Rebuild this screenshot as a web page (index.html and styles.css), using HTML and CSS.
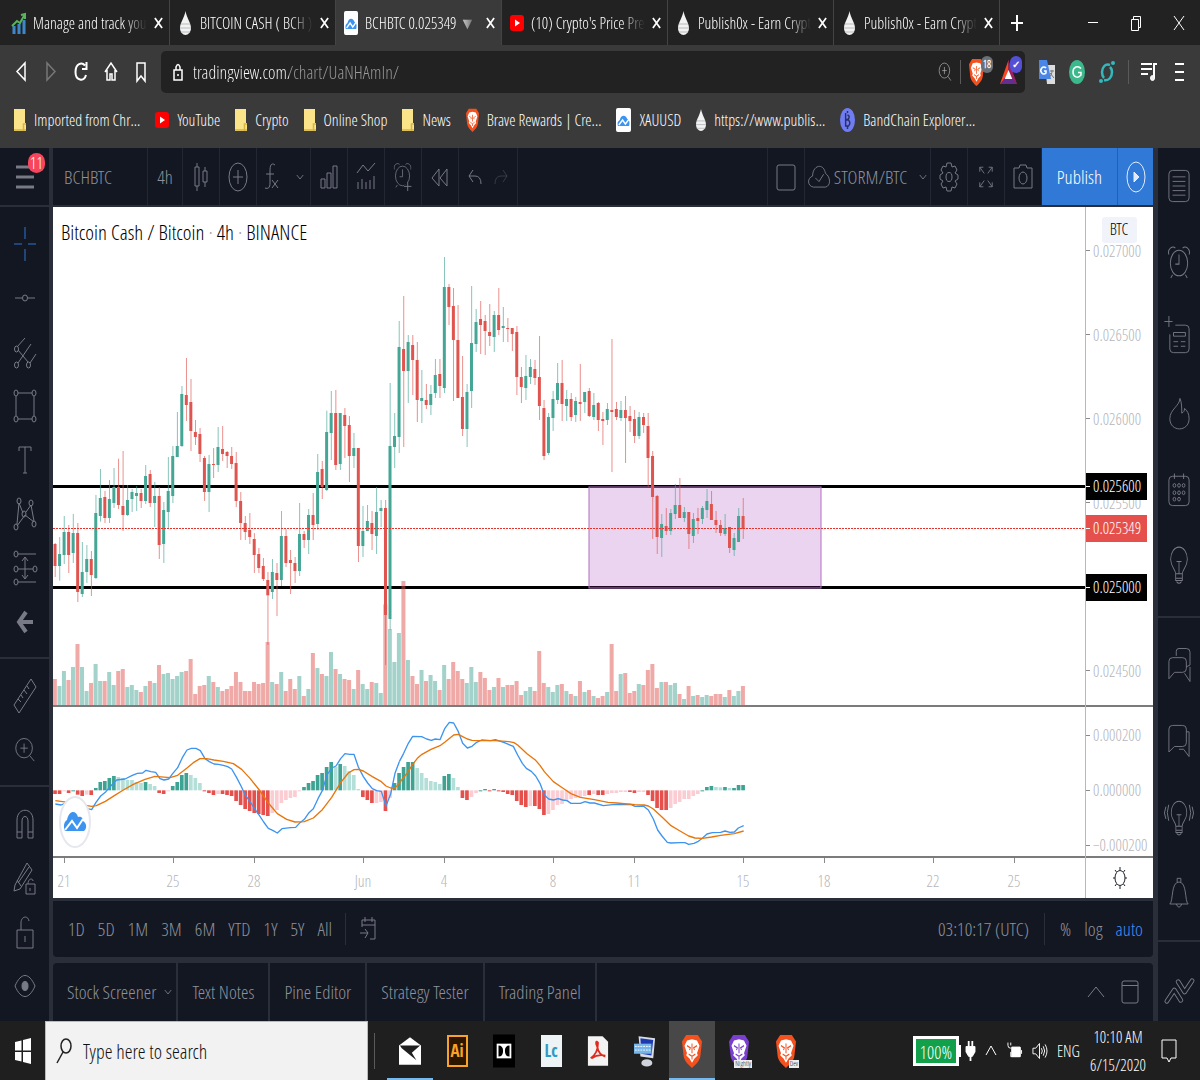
FILE: index.html
```html
<!DOCTYPE html>
<html lang="en">
<head>
    <meta charset="UTF-8">
    <meta name="viewport" content="width=device-width, initial-scale=1.0">
    <title>BCHBTC 0.025349</title>
    <link rel="stylesheet" href="styles.css">
</head>
<body>
    <!-- Icon sprite -->
    <svg class="sprite" aria-hidden="true">
        <symbol id="drop" viewBox="0 0 12 24" preserveAspectRatio="none"><path d="M6 0C7 6 12 12 12 17c0 4-3 7-6 7s-6-3-6-7C0 12 5 6 6 0z" fill="#f2f2f2"/><path d="M1 13h10M0 17h12M1 21h10" stroke="#b4b8bc" stroke-width="1"/></symbol>
        <symbol id="yt" viewBox="0 0 14 16" preserveAspectRatio="none"><rect width="14" height="16" rx="3" fill="#f00"/><path d="M5 4.500l5 3.500-5 3.500z" fill="#fff"/></symbol>
        <symbol id="tv" viewBox="0 0 16 24" preserveAspectRatio="none"><rect width="16" height="24" rx="2" fill="#fff"/><path d="M2 18c-1-3 0-5 2-6 1-5 6-6 8-1 2 0 3 3 2 7z" fill="#3d94f0"/><path d="M3 17l4-5 3 4 4-5" fill="none" stroke="#fff" stroke-width="1.500"/></symbol>
        <symbol id="folder" viewBox="0 0 12 22" preserveAspectRatio="none"><path d="M0 0h11v14h1v8H0z" fill="#fbe389"/><path d="M0 21h12M9.500 22v-7H12" fill="none" stroke="#d9b53f" stroke-width="1.500"/></symbol>
        <symbol id="lion" viewBox="0 0 24 32" preserveAspectRatio="none"><path d="M5 1h14l5 6-2 14c-1 5-6 8-10 11-4-3-9-6-10-11L0 7z" fill="currentColor"/><path d="M6 6l6-1 6 1 3 5-3 7 1 2-4 3-3 4-3-4-4-3 1-2-3-7z" fill="#fff"/><path d="M6 11l4 2-1 2M18 11l-4 2 1 2M12 9v9M8 19l4 2 4-2M12 21v3" fill="none" stroke="currentColor" stroke-width="1.200"/></symbol>
        <symbol id="x" viewBox="0 0 10 12" preserveAspectRatio="none"><path d="M1 1l8 10M9 1L1 11"/></symbol>
        <symbol id="chev" viewBox="0 0 10 6" preserveAspectRatio="none"><path d="M1 1l4 4 4-4"/></symbol>
        <symbol id="bulb" viewBox="0 0 24 36" preserveAspectRatio="none"><path d="M8 25c0-4-6-6-6-13a10 11 0 0 1 20 0c0 7-6 9-6 13zM8 29h8M9 32q3 3 6 0M8 25v6h8v-6M9 14h6M12 14v11"/></symbol>
        <symbol id="alarm" viewBox="0 0 24 32" preserveAspectRatio="none"><ellipse cx="12" cy="17" rx="9.500" ry="12"/><path d="M12 9v9H8M1 9c-2-5 4-9 7-6M23 9c2-5-4-9-7-6M5 28l-2 3M19 28l2 3"/></symbol>
        <symbol id="mag" viewBox="0 0 24 28" preserveAspectRatio="none"><ellipse cx="11" cy="12" rx="9" ry="10.500"/><path d="M7 12h8M11 7v10M17 20l5 6"/></symbol>
    </svg>

    <!-- Browser -->
    <header class="browser">
        <div class="tabs">
            <div class="tab">
                <svg class="fav" viewBox="0 0 14 24" preserveAspectRatio="none"><path d="M2 23v-8M7 23V13M12 23V9" stroke="#3f87c8" stroke-width="3"/><path d="M0 15l5-5 3 2 5-9M9 4l4-1v5" fill="none" stroke="#59b35e" stroke-width="2"/></svg>
                <span class="tab-title">Manage and track you</span>
                <button class="close" aria-label="Close"><svg><use href="#x"/></svg></button>
            </div>
            <div class="tab">
                <svg class="fav drop"><use href="#drop"/></svg>
                <span class="tab-title">BITCOIN CASH ( BCH )</span>
                <button class="close" aria-label="Close"><svg><use href="#x"/></svg></button>
            </div>
            <div class="tab active">
                <svg class="fav"><use href="#tv"/></svg>
                <span class="tab-title">BCHBTC 0.025349 ▼ −</span>
                <button class="close" aria-label="Close"><svg><use href="#x"/></svg></button>
            </div>
            <div class="tab">
                <svg class="fav yt"><use href="#yt"/></svg>
                <span class="tab-title">(10) Crypto's Price Pre</span>
                <button class="close" aria-label="Close"><svg><use href="#x"/></svg></button>
            </div>
            <div class="tab">
                <svg class="fav drop"><use href="#drop"/></svg>
                <span class="tab-title">Publish0x - Earn Crypt</span>
                <button class="close" aria-label="Close"><svg><use href="#x"/></svg></button>
            </div>
            <div class="tab">
                <svg class="fav drop"><use href="#drop"/></svg>
                <span class="tab-title">Publish0x - Earn Crypt</span>
                <button class="close" aria-label="Close"><svg><use href="#x"/></svg></button>
            </div>
            <button class="new-tab" aria-label="New tab"><svg viewBox="0 0 12 18"><path d="M6 1v16M0 9h12" stroke-width="2"/></svg></button>
            <div class="win-buttons">
                <button aria-label="Minimize"><svg viewBox="0 0 12 16"><path d="M1 7.500h10"/></svg></button>
                <button aria-label="Restore"><svg viewBox="0 0 12 16"><path d="M1.500 4.500h7v11h-7zM3.500 4V1.500h7v11H9"/></svg></button>
                <button aria-label="Close window"><svg viewBox="0 0 12 16"><path d="M1 1l10 14M11 1L1 15"/></svg></button>
            </div>
        </div>

        <div class="nav">
            <div class="nav-buttons">
                <button aria-label="Back"><svg viewBox="0 0 14 22"><path d="M11 2v17L3 10.500z"/></svg></button>
                <button class="off" aria-label="Forward"><svg viewBox="0 0 14 22"><path d="M3 2v17l8-8.500z"/></svg></button>
                <button aria-label="Reload"><svg viewBox="0 0 14 22"><path d="M11 4.500C8 1 1.500 2 1.500 11S10 21 12 14M12.500 1v7H8" stroke-width="2"/></svg></button>
                <button aria-label="Home"><svg viewBox="0 0 14 22"><path d="M1 11l6-9 6 9M3 9v10h3v-6h2v6h3V9"/></svg></button>
                <button aria-label="Bookmark"><svg viewBox="0 0 14 22"><path d="M3 2h8v18l-4-5-4 5z"/></svg></button>
            </div>
            <div class="address">
                <svg class="lock" viewBox="0 0 10 18"><path d="M1 7h8v10H1zM3 7V4q2-5 4 0v3M5 11v2"/></svg>
                <input type="text" class="url" aria-label="Address" value="tradingview.com/chart/UaNHAmIn/">
                <svg class="find"><use href="#mag"/></svg>
                <span class="bar"></span>
                <span class="shield"><svg class="lion"><use href="#lion"/></svg><b class="badge gray">18</b></span>
                <span class="shield"><svg class="bat" viewBox="0 0 18 24" preserveAspectRatio="none"><path d="M9 0L0 24h9z" fill="#ff4724"/><path d="M9 0l9 24H9z" fill="#9e1f63"/><path d="M0 24h18l-5-6H5z" fill="#662d91"/><path d="M9 10l4 9H5z" fill="#fff"/></svg><b class="badge blue">✓</b></span>
            </div>
            <svg class="ext" viewBox="0 0 16 24"><path d="M6 5h10v19H8z" fill="#dcdcdc"/><path d="M0 0h8l4 19H0z" fill="#4a86e8"/><path d="M7 8a3 3.500 0 1 0 0 5v-2H5" fill="none" stroke="#fff" stroke-width="1.500"/><path d="M11 11h4M13 10c0 4-1 6-3 7M11 13l4 5" stroke="#777" fill="none"/></svg>
            <svg class="ext" viewBox="0 0 16 24"><ellipse cx="8" cy="12" rx="8" ry="12" fill="#3bb98c"/><path d="M12 8.500C9 5 4 7 4 12s5 7 8 3v-2.500H9" fill="none" stroke="#fff" stroke-width="1.500"/></svg>
            <svg class="ext" viewBox="0 0 16 24"><path d="M11 5C6 3 3 8 3 12c0 3 1 5 2 6M5 20c5 1 8-3 8-8 0-3-1-4-2-5" fill="none" stroke="#35b8bd" stroke-width="2.500"/><circle cx="14" cy="3" r="2" fill="#35b8bd"/><circle cx="2" cy="21" r="2" fill="#35b8bd"/></svg>
            <span class="bar"></span>
            <button class="ext-btn" aria-label="Media"><svg viewBox="0 0 16 20"><path d="M0 2h11M0 7h11M0 12h7M13 16V2h3" stroke-width="2"/><ellipse cx="11.500" cy="16" rx="2" ry="2.500" fill="#eee"/></svg></button>
            <button class="ext-btn" aria-label="Menu"><svg viewBox="0 0 16 20"><path d="M4 2h9M4 10h9M4 18h9" stroke-width="2"/></svg></button>
        </div>

        <nav class="bookmarks">
            <a href="#"><svg class="b-folder"><use href="#folder"/></svg>Imported from Chr...</a>
            <a href="#"><svg class="b-yt"><use href="#yt"/></svg>YouTube</a>
            <a href="#"><svg class="b-folder"><use href="#folder"/></svg>Crypto</a>
            <a href="#"><svg class="b-folder"><use href="#folder"/></svg>Online Shop</a>
            <a href="#"><svg class="b-folder"><use href="#folder"/></svg>News</a>
            <a href="#"><svg class="b-lion"><use href="#lion"/></svg>Brave Rewards | Cre...</a>
            <a href="#"><svg class="b-tv"><use href="#tv"/></svg>XAUUSD</a>
            <a href="#"><svg class="b-drop"><use href="#drop"/></svg>https://www.publis...</a>
            <a href="#"><svg class="b-tv" viewBox="0 0 16 24" preserveAspectRatio="none"><ellipse cx="8" cy="12" rx="8" ry="12" fill="#6f7cf2"/><path d="M6 5v13h3q3-3 0-6H6M6 12l3-1q2-3-1-4M8 3v2M8 18v3" fill="none" stroke="#2b2f63" stroke-width="1.500"/></svg>BandChain Explorer...</a>
        </nav>
    </header>

    <!-- Trading app -->
    <main class="app">
        <aside class="left">
            <button class="menu" aria-label="Menu"><svg viewBox="0 0 18 24"><path d="M0 2h13M0 12h18M0 22h18" stroke-width="3"/></svg><b class="count">11</b></button>
            <div class="tools">
                <button class="cross" aria-label="Cross"><svg viewBox="0 0 24 36"><path d="M12 1v12M12 23v12M1 18h8M15 18h8"/></svg></button>
                <button aria-label="Trend line"><svg viewBox="0 0 24 36"><path d="M2 18h7M15 18h7"/><ellipse cx="12" cy="18" rx="2.500" ry="3"/></svg></button>
                <button aria-label="Pitchfork"><svg viewBox="0 0 24 36"><path d="M4 13l8-9M5 29L18 10M17 29l6-9M5 16l10 12"/><ellipse cx="3.500" cy="15" rx="2" ry="3"/><ellipse cx="3.500" cy="31" rx="2" ry="3"/><ellipse cx="15.500" cy="31" rx="2" ry="3"/></svg></button>
                <button aria-label="Shapes"><svg viewBox="0 0 24 36"><path d="M5 5h14M5 31h14M3 8v20M21 8v20"/><ellipse cx="3" cy="5" rx="2" ry="3"/><ellipse cx="21" cy="5" rx="2" ry="3"/><ellipse cx="3" cy="31" rx="2" ry="3"/><ellipse cx="21" cy="31" rx="2" ry="3"/></svg></button>
                <button aria-label="Text"><svg viewBox="0 0 24 36"><path d="M6 9V5h12v4M12 5v26M10 31h4"/></svg></button>
                <button aria-label="Patterns"><svg viewBox="0 0 24 36"><path d="M4 28L6 7l4 10M4 30l8-11 9 7M13 16l5-7 3 16"/><ellipse cx="6" cy="5" rx="2" ry="3"/><ellipse cx="18" cy="7" rx="2" ry="3"/><ellipse cx="11" cy="18" rx="2" ry="3"/><ellipse cx="3" cy="31" rx="2" ry="3"/><ellipse cx="21" cy="28" rx="2" ry="3"/></svg></button>
                <button aria-label="Projection"><svg viewBox="0 0 24 36"><path d="M5 4h18M5 19h15M5 32h18M12 8v20M9 11l3-4 3 4M9 25l3 4 3-4"/><ellipse cx="3" cy="4" rx="2" ry="3"/><ellipse cx="3" cy="19" rx="2" ry="3"/><ellipse cx="22" cy="19" rx="2" ry="3"/><ellipse cx="3" cy="32" rx="2" ry="3"/></svg></button>
                <button aria-label="Back"><svg viewBox="0 0 24 36"><path d="M13 8L6 18l7 10M6 18h14" stroke-width="4"/></svg></button>
            </div>
            <div class="tools">
                <button aria-label="Measure"><svg viewBox="0 0 24 36"><path d="M1 27L18 1l5 8L6 35zM5 21l3 3M8 17l2 3M11 12l3 4M14 8l2 3"/></svg></button>
                <button aria-label="Zoom in"><svg viewBox="0 0 26 36"><use href="#mag" x="1" y="4" width="24" height="28"/></svg></button>
            </div>
            <div class="tools">
                <button aria-label="Magnet"><svg viewBox="0 0 24 36"><path d="M4 32V14c0-13 16-13 16 0v18h-5V15c0-6-6-6-6 0v17zM4 26h5M15 26h5"/></svg></button>
                <button aria-label="Stay in drawing mode"><svg viewBox="0 0 24 36"><path d="M2 25L14 3l5 7L7 29l-6 2zM4 20l4 6M5 23L16 7M13 24h9v10h-9zM15 24c0-6 5-6 5-3M17 28v3"/></svg></button>
                <button aria-label="Lock"><svg viewBox="0 0 24 36"><path d="M4 16h16v18H4zM8 16V9c0-7 7-8 8-2M12 22v6"/></svg></button>
                <button aria-label="Hide"><svg viewBox="0 0 24 36"><path d="M2 18C8 4 16 4 22 18 16 32 8 32 2 18z"/><ellipse cx="12" cy="18" rx="3" ry="4.500" fill="#787b86"/></svg></button>
            </div>
        </aside>

        <section class="center">
            <div class="toolbar">
                <button class="symbol">BCHBTC</button>
                <button class="w-35">4h</button>
                <button class="w-37" aria-label="Candles"><svg viewBox="0 0 16 30"><path d="M2 5h4v19H2zM4 1v4M4 24v5M10 9h4v11h-4zM12 5v4M12 20v5"/></svg></button>
                <button class="w-37" aria-label="Compare"><svg class="wide" viewBox="0 0 20 30"><ellipse cx="10" cy="15" rx="9" ry="14"/><path d="M10 8v14M5 15h10"/></svg></button>
                <button class="fx" aria-label="Indicators"><svg viewBox="0 0 16 30"><path d="M11 3c-4-3-5 1-5 6v12c0 5-2 6-5 5M2 12h8M8 18l6 8M14 18l-6 8"/></svg><svg class="chev"><use href="#chev"/></svg></button>
                <button class="w-37" aria-label="Financials"><svg class="wide" viewBox="0 0 20 30"><path d="M2 17h4v9H2zM8 11h4v15H8zM14 4h4v22h-4z"/></svg></button>
                <button class="w-37" aria-label="Templates"><svg class="wide" viewBox="0 0 20 30"><path d="M1 11l6-8 5 6 7-8M2 20v7M6 17v10M10 20v7M14 18v9M18 14v13"/></svg></button>
                <button class="w-37" aria-label="Alert"><svg class="wide" viewBox="0 0 20 32"><use href="#alarm" width="19" height="28"/><path d="M11 26h8M15 21v10" stroke="#131722" stroke-width="4"/><path d="M11 26h8M15 21v10"/></svg></button>
                <button class="w-37" aria-label="Replay"><svg class="wide" viewBox="0 0 20 30"><path d="M9 7v17l-7-8zM17 7v17l-7-8z"/></svg></button>
                <button class="history" aria-label="Undo"><svg viewBox="0 0 16 30"><path d="M6 8l-4 6 4 6M2 14h6q6 0 6 8"/></svg><svg class="dim" viewBox="0 0 16 30"><path d="M10 8l4 6-4 6M14 14H8q-6 0-6 8"/></svg></button>
                <span class="spacer"></span>
                <button class="w-37" aria-label="Layout"><svg class="wide" viewBox="0 0 20 30"><rect x="1" y="3" width="18" height="25" rx="2"/></svg></button>
                <button class="layout-name"><svg viewBox="0 0 24 26"><path d="M6 24c-7-1-7-10-1-12 0-12 12-15 14-3 6 4 6 14 0 15zM8 14l4 4 5-8"/></svg>STORM/BTC<svg class="chev"><use href="#chev"/></svg></button>
                <button class="w-37" aria-label="Settings"><svg class="wide" viewBox="0 0 20 30"><ellipse cx="10" cy="15" rx="3" ry="4.500"/><path d="M8 1h4l1 4 3-1 2 4-2 3 3 2v4l-3 2 2 3-2 4-3-1-1 4H8l-1-4-3 1-2-4 2-3-3-2v-4l3-2-2-3 2-4 3 1z"/></svg></button>
                <button class="w-37" aria-label="Fullscreen"><svg viewBox="0 0 18 28"><path d="M2 8V3h4M2 3l5 7M16 8V3h-4M16 3l-5 7M2 20v5h4M2 25l5-7M16 20v5h-4M16 25l-5-7"/></svg></button>
                <button class="w-37" aria-label="Snapshot"><svg class="wide" viewBox="0 0 20 30"><path d="M1 6h5l1-3h6l1 3h5v20H1z"/><ellipse cx="10" cy="16" rx="4" ry="6"/></svg></button>
                <button class="publish">Publish</button>
                <button class="play" aria-label="Play"><svg viewBox="0 0 20 32"><ellipse cx="10" cy="16" rx="9" ry="15"/><path d="M8 11l5 5-5 5z" fill="#dfeafa"/></svg></button>
            </div>

            <div class="chart">
                <div class="plots">
                    <h1>Bitcoin Cash / Bitcoin <i>·</i> 4h <i>·</i> BINANCE</h1>
                    <svg class="price-plot">
                        <path class="level" d="M0 279.500h3000M0 380.500h3000"/>
                        <rect class="zone" x="536" y="280" width="232" height="101"/>
                        <g id="volume" transform="scale(.33333)"></g>
                        <g id="candles" transform="scale(.33333)"></g>
                        <path class="last" d="M0 321.500h3000"/>
                    </svg>
                    <svg class="macd-plot">
                        <g transform="scale(.33333)">
                            <g id="hist"></g>
                            <g class="macd" transform="translate(-9 -21)">
                                <polyline points="16,312 33,315 45,310 60,304 85,312 110,325 125,329 138,307 152,288 166,277 180,260 200,240 225,237 247,226 262,220 278,219 288,211 303,215 317,217 330,236 342,240 356,237 368,221 383,203 397,173 411,150 424,145 438,145 451,152 465,176 478,185 492,192 505,193 520,196 533,200 545,207 560,233 573,258 587,287 601,306 615,328 628,346 641,366 655,385 668,391 682,399 696,386 722,383 737,382 750,368 763,358 777,338 790,326 804,296 817,272 831,225 845,204 858,198 872,176 885,161 899,163 912,163 925,201 940,230 953,249 967,266 980,272 994,274 1008,318 1022,282 1035,220 1048,185"/>
                                <polyline class="signal" points="16,302 60,308 107,316 125,319 139,317 166,304 193,287 220,270 250,253 285,238 315,229 360,233 383,226 411,204 430,188 450,176 470,176 492,180 520,184 550,191 575,208 600,235 628,270 655,309 682,341 710,358 735,366 763,365 790,354 817,329 845,292 872,248 895,219 912,209 925,208 940,213 967,230 994,245 1008,258 1022,264 1035,264 1042,256"/>
                            </g>
                            <g class="macd" transform="translate(1011 -21)">
                                <polyline points="28,185 41,160 55,130 68,109 95,110 110,117 124,121 136,117 150,119 164,86 178,67 191,69 205,95 218,130 232,144 246,139 260,127 275,120 302,122 316,119 343,128 370,139 383,165 397,190 409,205 424,214 437,228 450,250 463,285 476,297 490,300 505,296 518,300 531,302 543,310 571,310 585,305 600,309 613,309 640,317 668,314 722,313 735,319 760,318 775,330 790,357 803,390 816,408 832,427 843,429 870,428 885,428 896,433 912,430 925,424 937,415 951,402 967,398 992,397 1005,393 1020,397 1033,396 1045,384 1061,377"/>
                                <polyline class="signal" points="22,256 40,234 55,214 68,193 82,175 96,163 123,148 150,137 165,126 191,105 205,103 218,110 232,117 246,121 262,122 316,122 357,125 372,128 383,135 411,161 437,181 450,196 463,215 490,245 518,264 543,281 571,292 613,299 654,307 680,309 735,314 762,315 775,318 790,327 816,351 843,377 870,393 896,408 915,414 937,415 965,411 992,406 1033,401 1061,393"/>
                            </g>
                        </g>
                        <ellipse cx="22" cy="115" rx="15" ry="25" fill="#fff" stroke="#e6e8ee" stroke-width="2"/>
                        <path d="M12 124c-2-5-1-9 2-11 2-10 9-10 11-3 4-1 5 2 5 4 4 2 4 8 1 10z" fill="#3d94f0" stroke="none"/>
                        <path d="M12 123l7-9 5 7 6-9" fill="none" stroke="#fff" stroke-width="2"/>
                    </svg>
                    <svg class="time-axis" id="time-axis"></svg>
                </div>
                <div class="scale">
                    <svg class="price-scale" id="price-scale">
                        <rect x="16" y="10" width="35" height="26" rx="3" fill="#f0f3fa" stroke="none"/>
                        <text class="ccy" x="33" y="28">BTC</text>
                    </svg>
                    <svg class="macd-scale" id="macd-scale"></svg>
                    <button class="axis-gear" aria-label="Scale settings"><svg viewBox="0 0 16 24"><ellipse cx="8" cy="12" rx="5" ry="7.500"/><path d="M8 1v3M8 20v3M1 12h2M13 12h2M3 4l1.500 2M13 4l-1.500 2M3 20l1.500-2M13 20l-1.500-2"/></svg></button>
                </div>
            </div>

            <div class="ranges">
                <button>1D</button><button>5D</button><button>1M</button><button>3M</button><button>6M</button><button>YTD</button><button>1Y</button><button>5Y</button><button>All</button>
                <span class="bar"></span>
                <button class="goto" aria-label="Go to date"><svg viewBox="0 0 18 24"><path d="M3 10V3h13v19h-5M3 8h13M6 0v5M13 0v5M1 16h8M6 12l3 4-3 5"/></svg></button>
                <span class="spacer"></span>
                <span class="clock">03:10:17 (UTC)</span>
                <span class="bar"></span>
                <button>%</button><button>log</button><button class="auto">auto</button>
            </div>

            <div class="panels">
                <button>Stock Screener<svg class="chev"><use href="#chev"/></svg></button>
                <button>Text Notes</button>
                <button>Pine Editor</button>
                <button>Strategy Tester</button>
                <button>Trading Panel</button>
                <span class="spacer"></span>
                <button class="icon" aria-label="Expand"><svg viewBox="0 0 18 24"><path d="M1 17l8-10 8 10"/></svg></button>
                <button class="icon" aria-label="Maximize"><svg viewBox="0 0 18 24"><rect x="1" y="1" width="16" height="22" rx="2"/><path d="M1 5.500h16"/></svg></button>
            </div>
        </section>

        <aside class="right">
            <div class="widgets">
                <button aria-label="Watchlist"><svg viewBox="0 0 24 36"><rect x="1" y="1" width="22" height="34" rx="4"/><path d="M5 8h14M5 13h14M5 18h14M5 23h14M5 28h14"/></svg></button>
                <button aria-label="Alerts"><svg><use href="#alarm"/></svg></button>
                <button aria-label="Hotlist"><svg viewBox="0 0 24 36"><path d="M8 4h11q4 0 4 4v22q0 4-4 4H6q-4 0-4-4V14M6 12h13v4H6zM6 22h5M14 22h5M6 27h5M14 27h5M1-6v12M-4 0h9"/></svg></button>
                <button aria-label="Ideas"><svg viewBox="0 0 24 36"><path d="M13 1c0 8-11 12-11 22 0 15 21 15 21 0 0-5-2-9-5-11 0 3-1 4-3 5 0-6 0-12-2-16z"/></svg></button>
                <button aria-label="Calendar"><svg viewBox="0 0 24 36"><rect x="1" y="3" width="22" height="32" rx="4"/><path d="M7 0v6M17 0v6"/><g><ellipse cx="7" cy="13" rx="1.500" ry="2"/><ellipse cx="12" cy="13" rx="1.500" ry="2"/><ellipse cx="17" cy="13" rx="1.500" ry="2"/><ellipse cx="7" cy="21" rx="1.500" ry="2"/><ellipse cx="12" cy="21" rx="1.500" ry="2"/><ellipse cx="17" cy="21" rx="1.500" ry="2"/><ellipse cx="7" cy="28" rx="1.500" ry="2"/><ellipse cx="12" cy="28" rx="1.500" ry="2"/></g></svg></button>
                <button aria-label="My ideas"><svg class="bulb"><use href="#bulb"/></svg></button>
            </div>
            <div class="widgets second">
                <button aria-label="Public chats"><svg viewBox="0 0 24 36"><path d="M9 8V3q0-3 3-3h8q4 0 4 4v14l-4 2M1 33V14q0-4 4-4h11q4 0 4 4v8q0 4-4 4H7zM18 27l6 9V20"/></svg></button>
                <button aria-label="Private chats"><svg viewBox="0 0 24 36"><path d="M1 30V5q0-4 4-4h11q4 0 4 4v15q0 4-4 4H7zM20 8h3v27l-6-8h-5"/></svg></button>
                <button aria-label="Idea stream"><svg class="stream" viewBox="0 0 32 36"><use href="#bulb" x="6" y="0" width="20" height="40"/><path d="M5 5q-3 8 0 17M2 7q-3 7 0 13M27 5q3 8 0 17M30 7q3 7 0 13"/></svg></button>
                <button aria-label="Notifications"><svg viewBox="0 0 24 36"><path d="M2 30c4-3 1-24 10-24s6 21 10 24zM10 6V2h4v4M9 30q3 7 6 0"/></svg></button>
            </div>
            <div class="widgets last-widget">
                <button aria-label="DOM"><svg class="stream" viewBox="0 0 32 32"><path class="hollow" d="M3 27l8-12 7 11M15 6l7 11 8-12"/><path class="hollow inner" d="M3 27l8-12 7 11M15 6l7 11 8-12"/></svg></button>
            </div>
        </aside>
    </main>

    <!-- Taskbar -->
    <footer class="taskbar">
        <button class="start" aria-label="Start"><svg viewBox="0 0 16 26"><path d="M0 4l6.500-1.500v10H0zM8 2l8-2v12.500H8zM0 14h6.500v9.500L0 22zM8 14h8v12l-8-2z" fill="#fff"/></svg></button>
        <label class="search"><svg viewBox="0 0 16 26"><ellipse cx="10" cy="8" rx="5" ry="7"/><path d="M7 14L1 25"/></svg><input type="text" placeholder="Type here to search" aria-label="Search"></label>
        <span class="bar"></span>
        <div class="apps">
            <button class="open" aria-label="Mail"><svg viewBox="0 0 24 32"><path d="M0 10L12 1l12 9v21H0z" fill="#fff"/><path d="M1 10h22L14 18l5 8L3 13z" fill="#1f1f1f"/></svg></button>
            <button><span class="app-tile ai">Ai</span></button>
            <button aria-label="Dolby"><svg viewBox="0 0 24 36"><path d="M0 0h24v36H0z" fill="#000"/><path d="M4 10h16v16H4z" fill="#fff"/><path d="M6 12q5 0 5 6t-5 6zM18 12q-5 0-5 6t5 6z" fill="#000"/></svg></button>
            <button><span class="app-tile lc">Lc</span></button>
            <button aria-label="Acrobat"><svg viewBox="0 0 24 34"><path d="M1 1h16l6 6v26H1z" fill="#f3f3f3"/><path d="M4 25c6-4 8-11 8-17-2-3-3 0-1 4 1 5 4 10 9 11M5 25q7-5 15-3" fill="none" stroke="#e02b20" stroke-width="2"/></svg></button>
            <button aria-label="Remote"><svg viewBox="0 0 24 34"><path d="M5 1l18 2-2 22-14-2z" fill="#d8dde6"/><path d="M7 3l14 2-2 17-11-2z" fill="#1c39b0"/><path d="M0 9h19v11H0z" fill="#76b6ea"/><path d="M1 12h17M1 16h17" stroke="#fff" stroke-dasharray="2 1"/><ellipse cx="14" cy="30" rx="6" ry="4" fill="#cfd3da"/></svg></button>
            <button class="active" aria-label="Brave"><svg class="lion"><use href="#lion"/></svg></button>
            <button class="nightly"><svg class="lion"><use href="#lion"/></svg><small>Nightly</small></button>
            <button><svg class="lion"><use href="#lion"/></svg><small>Dev</small></button>
        </div>
        <span class="spacer"></span>
        <span class="battery">100%</span>
        <div class="tray">
            <svg class="plug" viewBox="0 0 10 22"><path d="M3 0v7M7 0v7M5 15v7" stroke-width="2"/><path d="M0 6h10v6l-3 5H3l-3-5z" fill="#fff"/></svg>
            <svg viewBox="0 0 12 20"><path d="M1 14l5-9 5 9"/></svg>
            <svg class="wide" viewBox="0 0 16 20"><path d="M5 6h9v10H5z" fill="#fff"/><path d="M5 6h9v10H4v-5M15.500 9v4M1 1v3q0 3 3 3M4 1v3"/></svg>
            <svg class="wide" viewBox="0 0 16 20"><path d="M1 7h3l4-5v16l-4-5H1zM10 7q2 3 0 6M12 5q3 5 0 10M14 3q4 7 0 14"/></svg>
            <span>ENG</span>
        </div>
        <div class="date"><span>10:10 AM</span><span>6/15/2020</span></div>
        <button class="notes" aria-label="Notifications"><svg viewBox="0 0 16 26"><path d="M1 2h14v18h-5l-2 4-2-4H1z"/></svg></button>
    </footer>

    <script src="chart.js"></script>
</body>
</html>
```
FILE: styles.css
```css
* {
    box-sizing: border-box;
}
body {
    margin: 0;
    min-height: 100vh;
    display: flex;
    flex-direction: column;
    background-color: #131722;
    font-family: "Open Sans Condensed Light", "Roboto Condensed", "Liberation Sans", sans-serif;
    font-size: 16px;
    line-height: 20px;
    color: #787b86;
}
button {
    background: none;
    border: none;
    padding: 0;
    margin: 0;
    font: inherit;
    color: inherit;
    display: flex;
    align-items: center;
    justify-content: center;
    cursor: pointer;
}
svg {
    fill: none;
    stroke: currentColor;
    flex: none;
    overflow: visible;
}
symbol [fill]:not([stroke]) {
    stroke: none;
}
.sprite {
    position: absolute;
    width: 0;
    height: 0;
}
.spacer {
    flex: 1;
}
.bar {
    width: 1px;
    flex: none;
    background-color: #5a5a5a;
}
.chev {
    width: 8px;
    height: 6px;
}

/* Browser */
.browser {
    background-color: #3a3a3a;
    color: #fff;
}
.tabs {
    display: flex;
    height: 45px;
    padding-left: 4px;
    background-color: #222;
}
.tab {
    flex: 0 1 166px;
    min-width: 0;
    display: flex;
    align-items: center;
    gap: 7px;
    padding: 0 6px 0 8px;
    border-right: 1px solid #444;
}
.tab.active {
    background-color: #3a3a3a;
}
.fav {
    width: 14px;
    height: 24px;
    stroke: none;
}
.fav.drop {
    width: 11px;
    height: 24px;
    margin: 0 2px;
}
.fav.yt {
    height: 16px;
}
.tab-title {
    flex: 1;
    overflow: hidden;
    white-space: nowrap;
    -webkit-mask-image: linear-gradient(to right, #000 80%, transparent);
    mask-image: linear-gradient(to right, #000 80%, transparent);
}
.close svg {
    width: 9px;
    height: 12px;
    stroke-width: 2;
}
.new-tab {
    width: 34px;
}
.new-tab svg {
    width: 12px;
    height: 18px;
}
.win-buttons {
    display: flex;
    margin-left: auto;
}
.win-buttons button {
    width: 43px;
}
.win-buttons svg {
    width: 12px;
    height: 16px;
}
.nav {
    display: flex;
    align-items: center;
    height: 54px;
    padding: 0 13px 0 6px;
}
.nav-buttons {
    display: flex;
    width: 155px;
}
.nav-buttons button {
    width: 30px;
}
.nav-buttons svg {
    width: 14px;
    height: 22px;
    stroke-width: 1.5;
}
.nav-buttons .off {
    color: #777;
}
.address {
    flex: 1;
    display: flex;
    align-items: center;
    height: 42px;
    padding: 0 5px 0 12px;
    background-color: #222;
    border-radius: 5px;
}
.lock {
    width: 10px;
    height: 18px;
    stroke-width: 1.5;
}
.url {
    flex: 1;
    min-width: 0;
    margin-left: 10px;
    padding: 0;
    border: none;
    outline: none;
    font: inherit;
    font-size: 18px;
    color: transparent;
    background: linear-gradient(to right, #fff 96px, #9c9c9c 96px);
    -webkit-background-clip: text;
    background-clip: text;
}
.find {
    width: 14px;
    height: 20px;
    margin-right: 8px;
    color: #bbb;
}
.address .bar, .nav > .bar {
    height: 24px;
}
.shield {
    position: relative;
    display: flex;
    width: 24px;
    margin-left: 8px;
}
.shield + .shield {
    width: 20px;
    margin-left: 7px;
}
.lion {
    color: #f4511e;
    stroke: none;
}
.shield .lion {
    width: 15px;
    height: 28px;
}
.bat {
    width: 17px;
    height: 24px;
    stroke: none;
}
.badge {
    position: absolute;
    top: -2px;
    right: 0;
    width: 12px;
    height: 17px;
    border-radius: 6px;
    background-color: #6b6f76;
    font-size: 10px;
    line-height: 17px;
    text-align: center;
}
.shield .blue {
    top: -4px;
    right: -2px;
    background-color: #5350d6;
}
.ext {
    width: 16px;
    height: 24px;
    margin-left: 14px;
    stroke: none;
}
.nav > .bar {
    margin: 0 12px 0 13px;
}
.ext-btn svg {
    width: 16px;
    height: 20px;
}
.ext-btn + .ext-btn {
    margin-left: 14px;
}
.bookmarks {
    display: flex;
    align-items: center;
    gap: 15px;
    height: 49px;
    padding: 0 14px 7px;
}
.bookmarks a {
    display: flex;
    align-items: center;
    gap: 8px;
    color: #fff;
    text-decoration: none;
    white-space: nowrap;
}
.bookmarks svg {
    stroke: none;
}
.b-folder {
    width: 12px;
    height: 22px;
}
.b-yt {
    width: 14px;
    height: 16px;
}
.b-lion {
    width: 13px;
    height: 24px;
    color: #f4511e;
}
.b-tv {
    width: 15px;
    height: 24px;
}
.b-drop {
    width: 10px;
    height: 22px;
}

/* App */
.app {
    flex: 1;
    display: flex;
    background-color: #2a2e39;
    font-size: 19px;
}
.left {
    width: 49px;
    margin-right: 4px;
    background-color: #131722;
}
.menu {
    position: relative;
    width: 49px;
    height: 57px;
}
.menu svg {
    width: 18px;
    height: 24px;
}
.count {
    position: absolute;
    top: 5px;
    right: 4px;
    width: 17px;
    height: 20px;
    border-radius: 9px;
    background-color: #f7455d;
    color: #fff;
    font-size: 16px;
    font-weight: normal;
}
.tools {
    padding: 10px 0 8px;
    border-top: 2px solid #2a2e39;
}
.tools button {
    width: 49px;
    height: 54px;
}
.tools svg {
    width: 24px;
    height: 36px;
}
.tools .cross {
    color: #2f74d0;
}
.center {
    flex: 1;
    min-width: 0;
    display: flex;
    flex-direction: column;
    color: #8e919b;
}
.center svg {
    color: #787b86;
}
.toolbar {
    display: flex;
    height: 57px;
    margin-bottom: 2px;
    background-color: #131722;
}
.toolbar button {
    border-right: 1px solid #232733;
}
.toolbar svg {
    width: 16px;
    height: 30px;
}
.toolbar svg.wide {
    width: 20px;
}
.toolbar svg.chev {
    width: 8px;
    height: 6px;
}
.toolbar .symbol {
    width: 95px;
    padding-left: 11px;
    justify-content: flex-start;
}
.w-35 {
    width: 35px;
}
.w-37 {
    width: 37px;
}
.toolbar .fx {
    width: 54px;
    gap: 16px;
}
.toolbar .history {
    width: 59px;
    gap: 10px;
}
.dim {
    opacity: .35;
}
.toolbar .spacer {
    border-right: 1px solid #232733;
}
.toolbar .layout-name {
    width: 126px;
    gap: 4px;
}
.layout-name svg:first-child {
    width: 22px;
    height: 26px;
}
.layout-name .chev {
    margin-left: 8px;
}
.toolbar .publish, .toolbar .play {
    width: 76px;
    background-color: #3179d6;
    border-right: 1px solid #2260b4;
    color: #fff;
}
.toolbar .play {
    width: 35px;
    border: none;
}
.toolbar .play svg {
    width: 20px;
    height: 32px;
    color: #e3edfb;
}
.chart {
    display: flex;
    background-color: #fff;
}
.plots {
    position: relative;
    flex: 1;
    min-width: 0;
    overflow: hidden;
}
.plots h1 {
    position: absolute;
    top: 13px;
    left: 8px;
    margin: 0;
    font-size: 21px;
    line-height: 24px;
    font-weight: normal;
    color: #000;
}
.plots h1 i {
    color: #9a9da6;
    font-style: normal;
}
.plots > svg, .scale > svg {
    display: block;
    width: 100%;
    overflow: hidden;
}
.plots .price-plot, .scale .price-scale {
    height: 500px;
    border-bottom: 2px solid #7b7b7b;
}
.plots .macd-plot, .scale .macd-scale {
    height: 151px;
    border-bottom: 2px solid #7b7b7b;
}
.plots .time-axis {
    height: 40px;
}
.level {
    stroke: #000;
    stroke-width: 3;
}
.zone {
    fill: rgba(156, 39, 176, .2);
    stroke: #b070c0;
    stroke-width: 1;
}
.last {
    stroke: #e5332b;
    stroke-dasharray: 2 1;
}
.up {
    fill: #45a695;
    stroke: #45a695;
}
.down {
    fill: #e0544f;
    stroke: #e0544f;
}
.wick {
    stroke-width: 3;
    opacity: .65;
}
.body, .vol, .h {
    stroke: none;
}
.vol {
    opacity: .5;
}
.h.G {
    fill: #3fa394;
}
.h.g {
    fill: #b4dfd8;
}
.h.R {
    fill: #e5504c;
}
.h.p {
    fill: #fbcdd3;
}
.macd polyline {
    stroke: #3d94f0;
    stroke-width: 4;
    stroke-linejoin: round;
}
.macd .signal {
    stroke: #e8750a;
}
.scale {
    width: 68px;
    border-left: 1px solid #b8b8b8;
}
.scale text, .time-axis text {
    fill: #b4b6bb;
    stroke: none;
    font-size: 16px;
}
.time-axis text, .scale text.ccy {
    text-anchor: middle;
}
.scale text.ccy {
    fill: #000;
}
.scale text.tagged {
    fill: #fff;
}
.tick {
    stroke: #8a8a8a;
}
.axis-gear {
    width: 67px;
    height: 40px;
}
.axis-gear svg {
    width: 16px;
    height: 24px;
    color: #1c1f28;
}
.ranges {
    display: flex;
    align-items: center;
    gap: 13px;
    height: 56px;
    margin-top: 3px;
    padding: 0 10px 0 15px;
    background-color: #131722;
    border-radius: 0 0 4px 4px;
}
.ranges .bar {
    height: 32px;
    background-color: #2a2e39;
}
.ranges .clock + .bar {
    margin: 0 2px;
}
.goto svg {
    width: 18px;
    height: 24px;
}
.auto {
    color: #3f8ff8;
}
.panels {
    flex: 1;
    display: flex;
    margin-top: 6px;
    background-color: #131722;
    border-radius: 4px 4px 0 0;
}
.panels button {
    gap: 8px;
    padding: 0 14px;
    border-right: 2px solid #2a2e39;
}
.panels button:first-child {
    padding-right: 4px;
}
.panels .icon {
    padding: 0 8px;
    border: none;
}
.panels .icon:last-child {
    padding-right: 14px;
}
.icon svg {
    width: 18px;
    height: 24px;
}
.right {
    width: 42px;
    margin-left: 5px;
    background-color: #131722;
}
.widgets {
    padding-bottom: 12px;
    border-bottom: 2px solid #2a2e39;
}
.widgets.second {
    padding: 9px 0;
}
.widgets button {
    width: 42px;
    height: 76px;
}
.widgets svg {
    width: 22px;
    height: 34px;
}
.widgets svg.bulb {
    width: 20px;
    height: 40px;
}
.widgets svg.stream {
    width: 30px;
    height: 36px;
}
.widgets.last-widget {
    padding: 0;
    border: none;
}
.last-widget button {
    height: 76px;
    padding-top: 22px;
}
.hollow {
    stroke-width: 5;
    stroke-linejoin: round;
    stroke-linecap: round;
}
.hollow.inner {
    stroke: #131722;
    stroke-width: 3;
}

/* Taskbar */
.taskbar {
    display: flex;
    align-items: center;
    height: 60px;
    background-color: #1f1f1f;
    color: #fff;
}
.start {
    width: 45px;
    height: 60px;
}
.start svg {
    width: 16px;
    height: 26px;
    stroke: none;
}
.search {
    display: flex;
    align-items: center;
    gap: 11px;
    width: 323px;
    height: 60px;
    padding: 0 10px;
    background-color: #f2f2f2;
    border: 1px solid #bbb;
    color: #222;
}
.search svg {
    width: 16px;
    height: 26px;
    stroke-width: 1.5;
}
.search input {
    flex: 1;
    min-width: 0;
    padding: 0;
    border: none;
    outline: none;
    background: none;
    font: inherit;
    font-size: 20px;
}
.search input::placeholder {
    color: #111;
    opacity: 1;
}
.taskbar > .bar {
    height: 36px;
    margin: 0 12px 0 6px;
}
.apps {
    display: flex;
}
.apps button {
    position: relative;
    width: 46px;
    height: 60px;
    margin-right: 1px;
}
.apps svg {
    width: 22px;
    height: 34px;
    stroke: none;
}
.apps svg.lion {
    width: 20px;
}
.apps .open, .apps .active {
    border-bottom: 3px solid #76b9ed;
    padding-top: 3px;
}
.apps .active {
    background-color: #484848;
}
.nightly .lion {
    color: #7b3fd0;
}
.apps small {
    position: absolute;
    right: 10px;
    bottom: 13px;
    padding: 0 1px;
    background-color: #eee;
    color: #222;
    font-size: 7px;
    line-height: 8px;
}
.app-tile {
    width: 21px;
    height: 32px;
    font-family: "Open Sans Condensed", "Liberation Sans", sans-serif;
    font-size: 17px;
    line-height: 32px;
    background-color: #eef3f5;
    color: #2f9ac4;
}
.app-tile.ai {
    background-color: #2d1600;
    border: 2px solid #f7a32b;
    color: #f7a32b;
    line-height: 28px;
}
.battery {
    position: relative;
    width: 46px;
    height: 30px;
    border: 3px solid #fff;
    background-color: #12a04b;
    font-size: 18px;
    line-height: 26px;
    text-align: center;
}
.battery::after {
    content: "";
    position: absolute;
    top: 6px;
    right: -5px;
    width: 2px;
    height: 12px;
    background-color: #fff;
}
.tray {
    display: flex;
    align-items: center;
    gap: 10px;
    margin-left: 7px;
}
.tray svg {
    width: 12px;
    height: 20px;
}
.tray svg.plug {
    width: 9px;
    height: 22px;
}
.tray svg.wide {
    width: 15px;
}
.date {
    display: flex;
    flex-direction: column;
    gap: 8px;
    width: 76px;
    text-align: center;
}
.notes {
    width: 26px;
    margin-right: 18px;
}
.notes svg {
    width: 16px;
    height: 26px;
}
```
FILE: chart.js
```js
// Each candle: direction, high, top, bottom, low, volume top.
// Coordinates are thirds of a pixel; each block has its own origin.
const STEP = 13.58;
const FIRST_X = 6.6;

const may = `r 609 612 678 711 1017|g 591 642 678 722 1038|g 528 576 645 672 993|r 555 576 645 699 1020|g 522 579 639 669 981
r 549 579 756 786 912|g 606 696 762 771 981|g 615 657 696 729 1053|r 633 657 705 768 1029|g 465 519 714 717 972
g 387 474 528 545 1023|r 453 471 534 549 1023|g 420 477 534 549 996|g 384 441 489 504 1035|r 356 441 495 507 993
r 333 498 525 573 987|g 435 480 525 528 1041|g 447 456 477 516 1035|g 438 459 468 513 1050|r 447 459 483 504 1056
g 375 408 483 492 1038|r 390 402 489 501 1023|g 426 468 489 561 1029|r 441 468 615 657 975|g 486 510 612 669 1002
g 351 453 516 567 999|g 318 348 468 489 1017|g 216 318 351 351 1008|g 138 162 318 321 996|r 54 165 195 243 993
r 117 186 273 333 957|r 240 276 291 315 1062|r 264 282 342 366 1038|r 348 354 456 483 1035|g 345 372 456 516 1008
r 324 372 375 414 1026|g 261 321 375 396 1041|r 258 327 342 363 1053|r 333 336 348 384 1047|r 321 348 372 387 1038
r 336 369 483 501 996|r 456 483 549 600 1026|r 528 549 576 600 1053|r 519 570 591 612 1053|r 579 597 645 699 1026
r 624 642 684 699 1032|r 654 678 717 723 1029|r 696 720 766 915 906|g 657 696 756 777 1026|r 669 699 720 828 1032
g 513 588 720 738 996|r 567 588 669 681 1053|r 630 660 669 762 1017|r 651 669 693 729 1047|g 489 582 693 708 1008
r 573 582 600 624 1068|g 507 525 600 642 1047|r 459 525 555 600 939|g 342 396 552 570 984|r 363 387 441 477 1002
g 212 276 450 453 1008|g 153 219 279 360 936|r 150 219 375 390 987|g 219 219 372 390 1002|r 204 225 258 354 1017
r 228 255 348 426 1020|g 279 324 348 384 1047|r 324 324 618 666 990|g 498 573 618 651 1032|g 495 543 573 573 1047
r 513 549 582 630 1026|g 441 516 588 642 1029|g 480 504 513 561 1059|r 480 504 825 975 793`;

const june = `g 429 618 1137 1170 1167|g 519 588 621 684 1266|g 243 321 591 639 1179|r 168 327 393 621 1023|g 285 306 393 489 1260
r 285 315 360 465 1308|r 306 360 480 546 1332|g 390 474 483 549 1290|r 432 480 495 507 1323|g 435 462 495 525 1305
g 357 405 459 474 1323|r 357 402 438 474 1350|g 51 141 444 459 1275|r 132 141 201 255 1317|r 144 198 300 483 1266
r 195 300 474 474 1293|r 348 471 567 588 1317|g 432 456 567 621 1329|g 138 309 453 504 1281|g 207 246 312 336 1326
r 183 237 255 342 1296|r 225 243 273 345 1314|r 192 276 288 318 1350|g 213 225 291 336 1341|r 144 225 270 285 1314
g 201 258 264 306 1341|r 234 264 267 306 1335|r 264 264 282 333 1335|r 258 276 411 465 1323|r 381 411 441 489 1365
g 345 408 444 480 1353|g 357 381 411 432 1341|r 360 387 414 435 1353|r 288 411 498 540 1233|r 480 504 648 660 1329
g 519 531 639 645 1341|g 453 477 534 573 1356|g 369 429 480 492 1335|r 360 429 492 543 1332|g 450 477 498 543 1353
r 459 477 531 543 1362|g 471 483 525 546 1368|r 372 486 492 543 1323|g 456 456 486 519 1356|r 444 453 528 531 1350
g 459 495 531 540 1368|r 486 489 540 573 1374|r 516 537 543 615 1368|g 489 507 540 555 1356|r 297 510 516 696 1212
r 486 507 531 540 1353|g 483 510 534 543 1302|r 468 510 534 669 1299|r 498 528 543 576 1359|r 510 537 588 609 1353
g 516 531 588 597 1332|r 519 531 555 579 1335|r 519 558 654 741 1290|r 633 648 771 897 1272|r 765 768 891 942 1344
g 822 852 894 951 1326|r 804 858 873 885 1326|g 807 819 873 885 1335|g 732 795 822 837 1329|r 714 795 834 834 1362
g 801 816 834 846 1377|r 816 816 882 927 1338|g 819 837 888 909 1368|r 804 834 843 882 1365|g 798 804 837 852 1371
g 747 783 810 834 1365|r 753 792 840 840 1368|r 813 840 855 879 1362|r 840 855 879 888 1362|g 822 864 882 888 1371
r 861 861 924 939 1350|g 879 894 930 948 1368|g 804 828 906 906 1353|r 774 828 867 897 1338`;

// MACD histogram: G/g growing and falling above zero, R/p below zero
const hist = `R282 R282 p274 R279 G274 R284 R288 p284 R285 G264 G246 G243 G234 G228 g231 g234 g240 g240 g246 g249
G246 g252 g258 R279 R282 p274 G258 G246 G225 G219 g225 g234 g249 R273 R279 R285 p282 R282 R285 R288
R303 R315 R327 R333 R339 R342 R345 R348 p339 p330 p309 p300 p294 p291 p272 G261 G249 G243 G225 G219
G201 G186 g201 G192 g198 g213 g225 g267 R291 R300 R309 p309 p306 R333 p294 G249 G219 G201 G186 G186
g204 g219 g234 g243 g246 g252 G228 G222 g234 g261 R294 R300 p291 p279 G273 G267 R273 G267 R273 R276
R282 R285 R303 R315 R321 p318 R318 R327 R345 p342 p330 p315 p312 p303 p297 p294 p291 p288 R285 p282
R285 R285 p282 p279 p279 p276 p276 R276 R279 p276 p276 R285 R303 R324 R330 R330 p324 p312 p306 p297
p297 p288 p282 G272 G261 G258 g261 g262 G261 g264 G264 G255 G255`.split(/\s+/);

function el(tag, attrs, parent, text) {
    const node = document.createElementNS('http://www.w3.org/2000/svg', tag);
    for (const key in attrs) node.setAttribute(key, attrs[key]);
    if (text) node.textContent = text;
    parent.appendChild(node);
    return node;
}

const volume = document.getElementById('volume');
const candles = document.getElementById('candles');

function drawBlock(data, start, offset) {
    data.split(/[|\n]/).forEach(function(row, i) {
        const parts = row.split(' ');
        const dir = parts[0] === 'g' ? 'up' : 'down';
        const [high, top, bottom, low, vol] = parts.slice(1).map(n => Number(n) + offset);
        const x = FIRST_X + (start + i) * STEP;
        el('rect', { class: 'vol ' + dir, x: x - 7, y: vol, width: 12, height: 1494 - vol }, volume);
        el('path', { class: 'wick ' + dir, d: `M${x} ${high}V${low}` }, candles);
        el('rect', { class: 'body ' + dir, x: x - 5, y: top, width: 9, height: Math.max(bottom - top, 3) }, candles);
    });
}

drawBlock(may, 0, 399);
drawBlock(june, 74, 99);

const histGroup = document.getElementById('hist');
hist.forEach(function(item, i) {
    const y = Number(item.slice(1)) - 21;
    const zero = 250;
    el('rect', {
        class: 'h ' + item[0],
        x: FIRST_X + i * STEP - 6,
        y: Math.min(y, zero),
        width: 11,
        height: Math.max(Math.abs(y - zero), 3)
    }, histGroup);
});

// Scales
const priceScale = document.getElementById('price-scale');
[['0.027000', 44], ['0.026500', 128], ['0.026000', 212], ['0.025500', 296], ['0.024500', 464]].forEach(function([label, y]) {
    el('path', { class: 'tick', d: `M0 ${y - 0.5}h4` }, priceScale);
    el('text', { x: 7, y: y + 6 }, priceScale, label);
});
[['0.025600', 279, '#000'], ['0.025349', 321, '#e5504c'], ['0.025000', 380, '#000']].forEach(function([label, y, color]) {
    el('rect', { x: 0, y: y - 13, width: 61, height: 27, fill: color, stroke: 'none' }, priceScale);
    el('path', { d: `M0 ${y + 0.5}h4`, stroke: '#fff' }, priceScale);
    el('text', { class: 'tagged', x: 7, y: y + 6 }, priceScale, label);
});

const macdScale = document.getElementById('macd-scale');
[['0.000200', 28], ['0.000000', 83], ['−0.000200', 138]].forEach(function([label, y]) {
    el('path', { class: 'tick', d: `M0 ${y + 0.5}h4` }, macdScale);
    el('text', { x: 7, y: y + 6 }, macdScale, label);
});

const timeAxis = document.getElementById('time-axis');
[['21', 11], ['25', 120], ['28', 201], ['Jun', 310], ['4', 391], ['8', 500], ['11', 581], ['15', 690], ['18', 771], ['22', 880], ['25', 961]].forEach(function([label, x]) {
    el('path', { class: 'tick', d: `M${x + 0.5} 0v5` }, timeAxis);
    el('text', { x: x, y: 29 }, timeAxis, label);
});
```
